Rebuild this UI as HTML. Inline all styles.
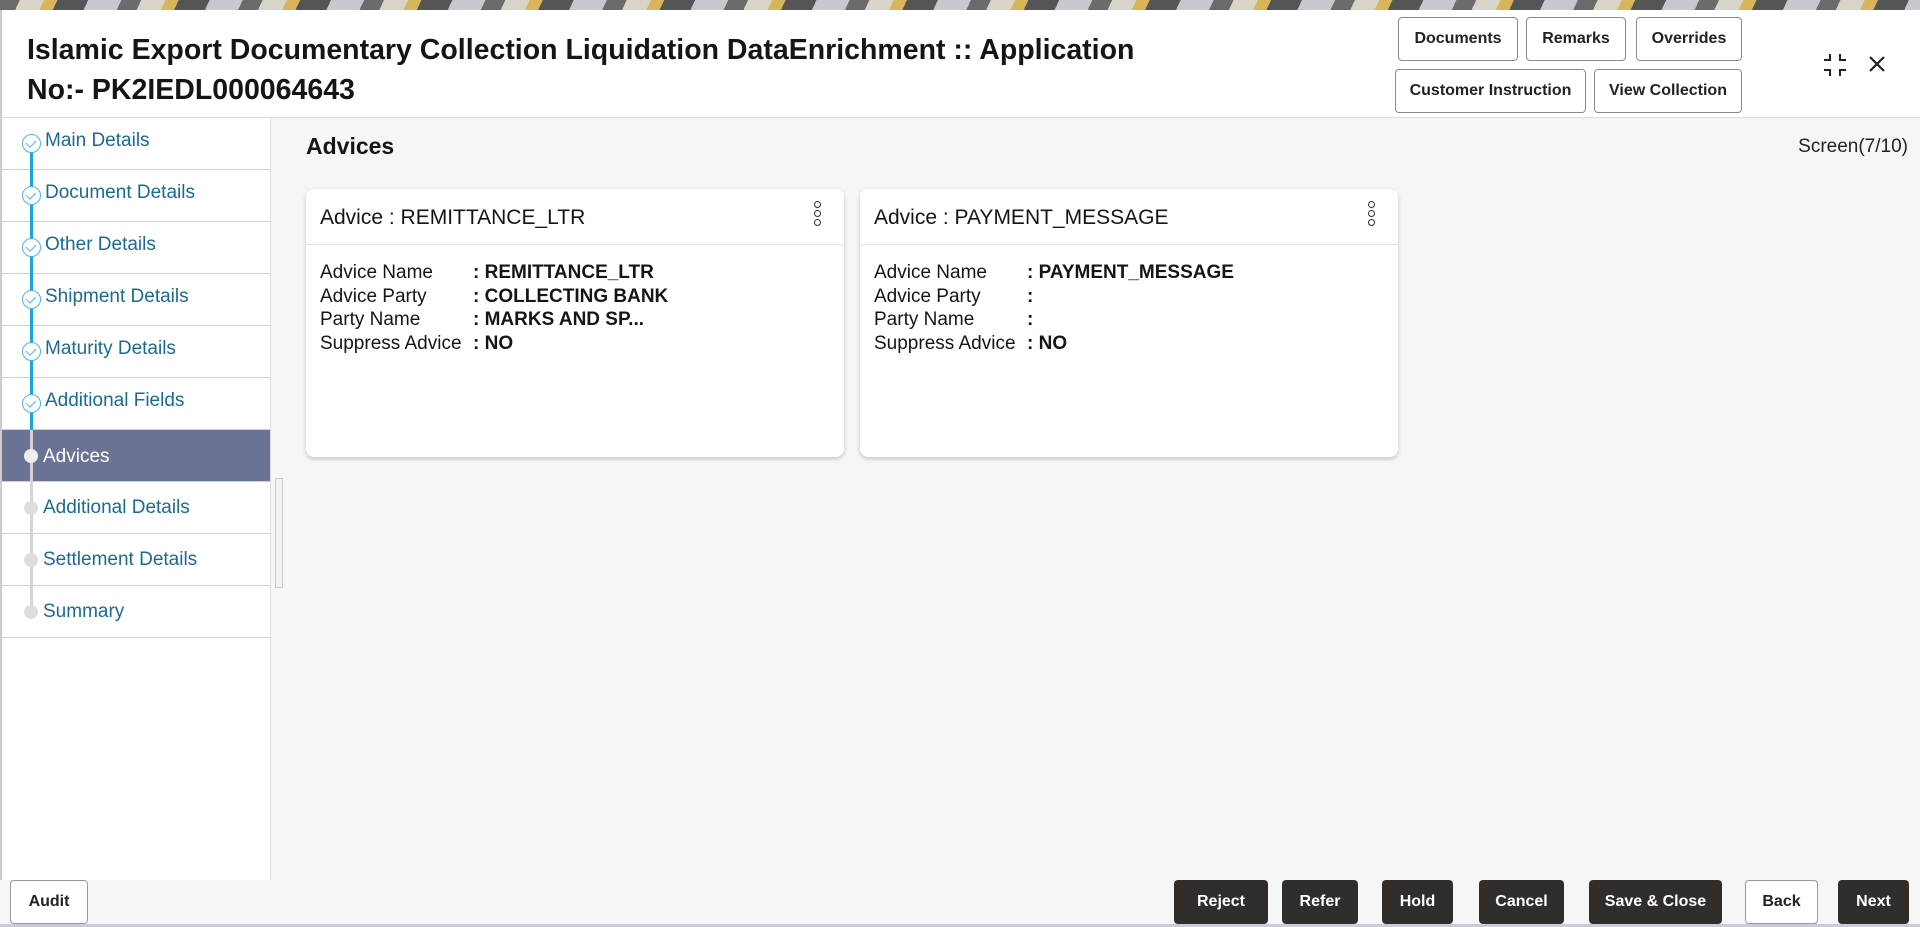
<!DOCTYPE html>
<html><head><meta charset="utf-8"><style>
*{box-sizing:border-box;margin:0;padding:0}
body{width:1920px;height:927px;overflow:hidden;font-family:"Liberation Sans",sans-serif;background:#f6f6f6;position:relative;color:#161513}
.strip{position:absolute;left:0;top:0;width:1920px;height:11px;background:repeating-linear-gradient(115deg,#6b6b6b 0 18px,#d9d4c8 18px 40px,#d8b55a 40px 52px,#555 52px 80px,#c5c9cf 80px 110px)}
.hdr{position:absolute;left:0;top:10px;width:1920px;height:108px;background:#fff;border-bottom:1px solid #ddd;border-left:2px solid #ccc}
.title{position:absolute;left:25px;top:20px;font-size:28.5px;font-weight:bold;line-height:40px;color:#161513}
.btn{position:absolute;height:44px;border:1px solid #8a8a8a;border-radius:4px;background:#fff;font-size:16px;font-weight:bold;color:#222;display:flex;align-items:center;justify-content:center}
.side{position:absolute;left:0;top:118px;width:271px;height:762px;background:#fff;border-right:1px solid #ddd;border-left:2px solid #ccc}
.item{position:relative;height:52px;border-bottom:1px solid #d0d0d0;font-size:19px;color:#1b6a92}
.item span{position:absolute;left:43px;top:12px}
.item.todo span{left:41px;top:15px}
.item.act{background:#6b7394;color:#fff}
.item.act span{left:41px;top:16px}
.vl{position:absolute;left:28px;width:3px;top:0;height:52px}
.done .vl{background:#1aa3de}
.todo .vl,.act .vl{background:#d4d4d4;left:28px}
.ck{position:absolute;left:20px;top:16px;width:19px;height:19px;border:1.5px solid #4bb3e6;border-radius:50%;background:#fff}
.ck:after{content:"";position:absolute;left:5px;top:3px;width:5px;height:8px;border:solid #4bb3e6;border-width:0 1.5px 1.5px 0;transform:rotate(45deg)}
.dot{position:absolute;left:22px;top:19px;width:14px;height:14px;border-radius:50%;background:#ddd}
.act .dot{background:#eee}
.card{position:absolute;top:189px;width:538px;height:268px;background:#fff;border-radius:8px;box-shadow:0 2px 5px rgba(0,0,0,.2)}
.ch{height:56px;border-bottom:1px solid #e3e3e3;font-size:21px;padding:17px 0 0 14px}
.kb{position:absolute;right:22px;top:12px;width:8px}
.kb i{display:block;width:7px;height:7px;border:1.5px solid #333;border-radius:50%;margin-bottom:2px}
.rows{position:absolute;left:14px;top:72px;font-size:19px;line-height:23.5px}
.rows div{white-space:nowrap}
.rows .l{display:inline-block;width:153px}
.rows b{font-weight:bold}
.fb{position:absolute;top:880px;height:44px;border-radius:4px;background:#312d2a;color:#fff;font-size:16px;font-weight:bold;display:flex;align-items:center;justify-content:center}
</style></head><body>
<div class="strip"></div>
<div class="hdr">
<div class="title">Islamic Export Documentary Collection Liquidation DataEnrichment :: Application<br>No:- PK2IEDL000064643</div>
</div>
<div class="btn" style="left:1398px;top:17px;width:120px">Documents</div>
<div class="btn" style="left:1526px;top:17px;width:100px">Remarks</div>
<div class="btn" style="left:1636px;top:17px;width:106px">Overrides</div>
<div class="btn" style="left:1395px;top:69px;width:191px">Customer Instruction</div>
<div class="btn" style="left:1594px;top:69px;width:148px">View Collection</div>
<svg style="position:absolute;left:1822px;top:52px" width="26" height="26" viewBox="0 0 26 26" fill="none" stroke="#222" stroke-width="2"><path d="M2 8h6V2M18 2v6h6M2 18h6v6M18 24v-6h6"/></svg>
<svg style="position:absolute;left:1868px;top:55px" width="18" height="18" viewBox="0 0 18 18" stroke="#222" stroke-width="2.2"><path d="M2 2L16 16M16 2L2 16"/></svg>

<div class="side">
<div class="item done"><div class="vl" style="top:26px;height:26px"></div><div class="ck"></div><span>Main Details</span></div>
<div class="item done"><div class="vl"></div><div class="ck"></div><span>Document Details</span></div>
<div class="item done"><div class="vl"></div><div class="ck"></div><span>Other Details</span></div>
<div class="item done"><div class="vl"></div><div class="ck"></div><span>Shipment Details</span></div>
<div class="item done"><div class="vl"></div><div class="ck"></div><span>Maturity Details</span></div>
<div class="item done"><div class="vl"></div><div class="ck"></div><span>Additional Fields</span></div>
<div class="item act"><div class="vl"></div><div class="dot"></div><span>Advices</span></div>
<div class="item todo"><div class="vl"></div><div class="dot"></div><span>Additional Details</span></div>
<div class="item todo"><div class="vl"></div><div class="dot"></div><span>Settlement Details</span></div>
<div class="item todo"><div class="vl" style="height:26px"></div><div class="dot"></div><span>Summary</span></div>
</div>
<div style="position:absolute;left:275px;top:478px;width:8px;height:110px;border:1px solid #ccc;background:#f3f3f3"></div>

<div style="position:absolute;left:306px;top:133px;font-size:23px;font-weight:bold">Advices</div>
<div style="position:absolute;right:12px;top:136px;font-size:19px;color:#222">Screen(7/10)</div>

<div class="card" style="left:306px">
<div class="ch">Advice : REMITTANCE_LTR</div>
<div class="kb"><i></i><i></i><i></i></div>
<div class="rows">
<div><span class="l">Advice Name</span><b>: REMITTANCE_LTR</b></div>
<div><span class="l">Advice Party</span><b>: COLLECTING BANK</b></div>
<div><span class="l">Party Name</span><b>: MARKS AND SP...</b></div>
<div><span class="l">Suppress Advice</span><b>: NO</b></div>
</div></div>
<div class="card" style="left:860px">
<div class="ch">Advice : PAYMENT_MESSAGE</div>
<div class="kb"><i></i><i></i><i></i></div>
<div class="rows">
<div><span class="l">Advice Name</span><b>: PAYMENT_MESSAGE</b></div>
<div><span class="l">Advice Party</span><b>:</b></div>
<div><span class="l">Party Name</span><b>:</b></div>
<div><span class="l">Suppress Advice</span><b>: NO</b></div>
</div></div>

<div class="btn" style="left:10px;top:880px;width:78px;height:44px;border-color:#999">Audit</div>
<div class="fb" style="left:1174px;width:94px">Reject</div>
<div class="fb" style="left:1282px;width:76px">Refer</div>
<div class="fb" style="left:1382px;width:71px">Hold</div>
<div class="fb" style="left:1479px;width:85px">Cancel</div>
<div class="fb" style="left:1589px;width:133px">Save &amp; Close</div>
<div class="btn" style="left:1745px;top:880px;width:73px;border-color:#999">Back</div>
<div class="fb" style="left:1838px;width:71px">Next</div>
<div style="position:absolute;left:0;top:924px;width:1920px;height:3px;background:#c9ccd6"></div>
</body></html>
